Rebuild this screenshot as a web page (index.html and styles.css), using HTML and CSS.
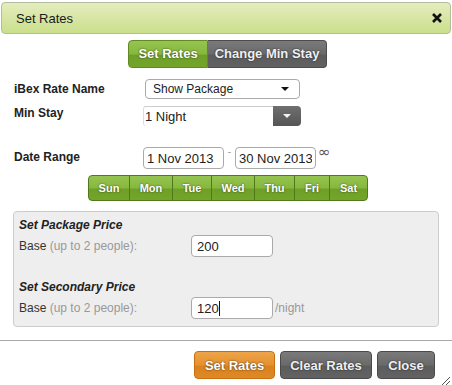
FILE: index.html
```html
<!DOCTYPE html>
<html>
<head>
    <meta charset='utf-8'>
    <title>Set Rates</title>
    <link rel="stylesheet" href="styles.css">
</head>
<body>
<div class="dialog">
    <div class="titlebar">
        <span class="title">Set Rates</span>
        <svg class="close-x" width="10" height="10" viewBox="0 0 10 10">
            <path d="M1 1 L9 9 M9 1 L1 9" stroke="#111" stroke-width="2.6"/>
        </svg>
    </div>

    <div class="tabs">
        <span class="tab tab-on">Set Rates</span>
        <span class="tab tab-off">Change Min Stay</span>
    </div>

    <div class="form">
        <div class="row row-name">
            <label class="lbl">iBex Rate Name</label>
            <div class="select select-name">
                <span>Show Package</span>
                <span class="caret"></span>
            </div>
        </div>
        <div class="row row-stay">
            <label class="lbl">Min Stay</label>
            <div class="select select-stay">
                <span class="stay-text">1 Night</span>
                <span class="stay-btn"><span class="caret caret-white"></span></span>
            </div>
        </div>
        <div class="row row-date">
            <label class="lbl">Date Range</label>
            <input class="date" type="text" value="1 Nov 2013">
            <span class="dash">-</span>
            <input class="date" type="text" value="30 Nov 2013">
            <span class="inf">&infin;</span>
        </div>
        <div class="days">
            <span class="day d-sun">Sun</span>
            <span class="day d-mon">Mon</span>
            <span class="day d-tue">Tue</span>
            <span class="day d-wed">Wed</span>
            <span class="day d-thu">Thu</span>
            <span class="day d-fri">Fri</span>
            <span class="day d-sat">Sat</span>
        </div>

        <div class="pricebox">
            <h4>Set Package Price</h4>
            <div class="price-row">
                <span class="base">Base <span class="muted">(up to 2 people):</span></span>
                <input class="price" type="text" value="200">
            </div>
            <h4 class="second">Set Secondary Price</h4>
            <div class="price-row">
                <span class="base">Base <span class="muted">(up to 2 people):</span></span>
                <span class="price price-focus">120<span class="cursor"></span></span>
                <span class="muted unit">/night</span>
            </div>
        </div>
    </div>

    <div class="footer">
        <span class="btn btn-orange">Set Rates</span>
        <span class="btn btn-gray">Clear Rates</span>
        <span class="btn btn-gray">Close</span>
    </div>
    <svg class="grip" width="11" height="11" viewBox="0 0 11 11">
        <path d="M10 1 L1 10 M10 5 L5 10 M10 9 L9 10" stroke="#555" stroke-width="1"/>
    </svg>
</div>
</body>
</html>
```

FILE: styles.css
```css
* {
    font-family: "Liberation Sans", Arial, Helvetica, sans-serif;
    box-sizing: border-box;
}

html, body {
    margin: 0;
    padding: 0;
    background: #fff;
}

.dialog {
    width: 452px;
    height: 385px;
    position: relative;
    color: #222;
    font-size: 12px;
}

.titlebar {
    margin: 2px 1px 0 1px;
    height: 32px;
    border: 1px solid #b4bca0;
    border-radius: 4px;
    background: linear-gradient(#e4edbd, #cadf8c);
    display: flex;
    align-items: center;
    justify-content: space-between;
    padding: 0 8px 0 14px;
}

.title {
    font-size: 13px;
    color: #1a1a1a;
}

.close-x {
    display: block;
}

.tabs {
    display: flex;
    justify-content: center;
    margin-top: 6px;
    padding-left: 3px;
}

.tab {
    height: 28px;
    line-height: 26px;
    font-size: 13px;
    font-weight: bold;
    color: #fff;
    text-shadow: 0 0 2px rgba(0, 0, 0, 0.7);
    padding: 0 13px;
}

.tab-on {
    width: 80px;
    padding: 0;
    text-align: center;
    border: 1px solid #5f8b22;
    border-radius: 4px 0 0 4px;
    background: linear-gradient(#96c452 0%, #86b83c 50%, #6e9f28 55%, #74a52a 100%);
}

.tab-off {
    width: 119px;
    padding: 0;
    text-align: center;
    border: 1px solid #4c4c4c;
    border-left: none;
    border-radius: 0 4px 4px 0;
    background: linear-gradient(#7a7a7a 0%, #6a6a6a 50%, #5c5c5c 55%, #626262 100%);
    color: #eef0f4;
}

.form {
    padding: 0 13px 0 14px;
}

.row {
    display: flex;
    align-items: flex-start;
}

.lbl {
    width: 129px;
    font-weight: bold;
    font-size: 12px;
    color: #222;
}

.row-name {
    margin-top: 11px;
}

.row-name .lbl {
    padding-top: 3px;
}

.select {
    height: 20px;
    display: flex;
    align-items: center;
    font-size: 12px;
    color: #222;
}

.select-name {
    margin-left: 2px;
    width: 155px;
    border: 1px solid #aaa;
    border-radius: 4px;
    justify-content: space-between;
    padding: 0 10px 0 7px;
}

.caret {
    width: 0;
    height: 0;
    border-left: 4px solid transparent;
    border-right: 4px solid transparent;
    border-top: 4px solid #111;
}

.caret-white {
    border-top-color: #f4f4f4;
}

.row-stay {
    margin-top: 7px;
}

.row-stay .lbl {
    padding-top: 0;
}

.select-stay {
    width: 158px;
    border-top: 1px solid #ccc;
    border-left: 1px solid #ddd;
    border-radius: 3px 4px 4px 3px;
}

.stay-text {
    flex: 1;
    padding-left: 1px;
    color: #222;
    font-size: 13px;
}

.stay-btn {
    width: 28px;
    height: 20px;
    margin-top: -1px;
    border-radius: 0 4px 4px 0;
    background: linear-gradient(#6f6f6f, #555);
    display: flex;
    align-items: center;
    justify-content: center;
}

.row-date {
    margin-top: 21px;
    align-items: center;
}

.row-date .lbl {
    margin-top: -2px;
}

.date {
    height: 22px;
    width: 81px;
    border: 1px solid #aaa;
    border-radius: 4px;
    padding: 0 3px;
    font-size: 13px;
    color: #222;
    margin: 0;
}

.dash {
    width: 11px;
    text-align: center;
    color: #999;
    font-size: 10px;
    align-self: flex-start;
    margin-top: -1px;
}

.inf {
    margin-left: 2px;
    color: #555;
    font-family: "DejaVu Sans", sans-serif;
    font-size: 15px;
    line-height: 15px;
    align-self: flex-start;
    margin-top: -2px;
}

.days {
    display: flex;
    margin: 6px 0 0 74px;
    width: 280px;
    height: 26px;
    border: 1px solid #4f7a1a;
    border-radius: 4px;
    overflow: hidden;
    background: linear-gradient(#96c452 0%, #86b83c 50%, #6e9f28 55%, #74a52a 100%);
}

.day {
    display: flex;
    align-items: center;
    justify-content: center;
    font-size: 11px;
    font-weight: bold;
    color: #fff;
    text-shadow: 0 0 2px rgba(0, 0, 0, 0.6);
    border-right: 1px solid #4f7a1a;
}

.d-sun { width: 41px; }
.d-mon { width: 43px; }
.d-tue { width: 39px; }
.d-wed { width: 43px; }
.d-thu { width: 40px; }
.d-fri { width: 35px; }
.d-sat { width: 37px; border-right: none; }

.pricebox {
    margin: 10px 0 0 -1px;
    width: 426px;
    height: 116px;
    background: #eee;
    border: 1px solid #ccc;
    border-radius: 4px;
    padding: 6px 5px 0 5px;
}

.pricebox h4 {
    margin: 0;
    font-size: 12px;
    font-style: italic;
    font-weight: bold;
    color: #222;
}

.pricebox h4.second {
    margin-top: 23px;
}

.price-row {
    display: flex;
    align-items: center;
    margin-top: 3px;
}

.base {
    width: 172px;
    color: #333;
}

.muted {
    color: #999;
}

.price {
    height: 22px;
    width: 82px;
    border: 1px solid #aaa;
    border-radius: 4px;
    background: #fff;
    padding: 0 5px;
    font-size: 13px;
    color: #222;
    margin: 0;
    display: flex;
    align-items: center;
}

.cursor {
    width: 1px;
    height: 15px;
    background: #111;
}

.unit {
    margin-left: 2px;
}

.footer {
    margin-top: 13px;
    border-top: 1px solid #aaa;
    padding: 10px 0 0 194px;
    display: flex;
    gap: 5px;
}

.btn {
    height: 28px;
    line-height: 27px;
    border-radius: 4px;
    font-size: 13px;
    font-weight: bold;
    color: #fff;
    text-align: center;
    text-shadow: 0 0 2px rgba(0, 0, 0, 0.7);
}

.btn-orange {
    width: 81px;
    border: 1px solid #c86e10;
    background: linear-gradient(#eda44a 0%, #e4912f 50%, #d9821e 55%, #de8a26 100%);
}

.btn-gray {
    border: 1px solid #4a4a4a;
    background: linear-gradient(#7a7a7a 0%, #6a6a6a 50%, #5c5c5c 55%, #626262 100%);
    color: #eef0f4;
}

.btn-gray:nth-child(2) {
    width: 92px;
}

.btn-gray:nth-child(3) {
    width: 58px;
}

.grip {
    position: absolute;
    right: 1px;
    bottom: 0;
}
```
